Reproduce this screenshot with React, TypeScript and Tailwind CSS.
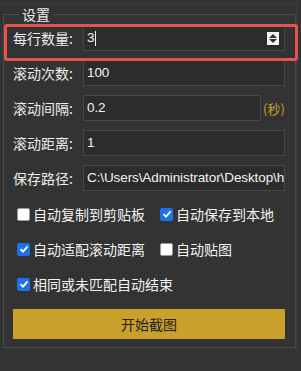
import React from "react";

const cjk = { fontFamily: '"Noto Sans CJK SC", "Liberation Sans", sans-serif' };
const latin = { fontFamily: '"Liberation Sans", "Noto Sans CJK SC", sans-serif' };

function Field({
  label,
  value,
  suffix,
  spin,
  caret,
}: {
  label: string;
  value: string;
  suffix?: string;
  spin?: boolean;
  caret?: boolean;
}) {
  return (
    <div className="flex items-center h-[26px] min-w-0">
      <div className="w-[70px] shrink-0 text-[14px] text-[#ececec] leading-none" style={cjk}>
        {label}
      </div>
      <div className="flex-1 min-w-0 flex items-center gap-[2px] h-full">
        <div className="flex-1 min-w-0 h-full flex items-center bg-[#2c2c2c] border border-[#474747] pl-[3px] pr-[2px] overflow-hidden">
          <span className="text-[13.5px] tracking-[-0.1px] text-[#f2f2f2] whitespace-nowrap leading-none" style={latin}>
            {value}
          </span>
          {caret && <span className="w-px h-[15px] bg-[#f2f2f2] ml-px" />}
          {spin && (
            <div className="ml-auto mr-[3px] w-[12px] h-[13px] bg-[#f0f0f0] flex flex-col items-center justify-center gap-[1px]">
              <svg width="8" height="4" viewBox="0 0 8 4">
                <path d="M0 4 L4 0 L8 4 Z" fill="#333" />
              </svg>
              <svg width="8" height="4" viewBox="0 0 8 4">
                <path d="M0 0 L4 4 L8 0 Z" fill="#333" />
              </svg>
            </div>
          )}
        </div>
        {suffix && (
          <span className="text-[13px] text-[#c9a02a] leading-none w-[22px] shrink-0" style={cjk}>
            {suffix}
          </span>
        )}
      </div>
    </div>
  );
}

function Check({ label, checked }: { label: string; checked?: boolean }) {
  return (
    <div className="flex items-center gap-[3px]">
      {checked ? (
        <div className="w-[13px] h-[13px] rounded-[2px] bg-[#1a73e8] flex items-center justify-center">
          <svg width="10" height="10" viewBox="0 0 10 10">
            <path d="M1.5 5.2 L4 7.6 L8.6 2.4" stroke="#fff" strokeWidth="1.8" fill="none" />
          </svg>
        </div>
      ) : (
        <div className="w-[13px] h-[13px] rounded-[2px] bg-white border border-[#9a9a9a]" />
      )}
      <span className="text-[14px] text-[#f2f2f2] leading-none" style={cjk}>
        {label}
      </span>
    </div>
  );
}

export default function App() {
  return (
    <div className="relative w-[301px] h-[371px] bg-[#333333] overflow-hidden pt-[4px]">
      <div className="border-t border-r border-[#3d3d3d] w-[297px] pt-[2px]">
        <fieldset className="min-w-0 w-[293px] ml-[3px] border border-[#4a4a4a] pl-[9px] pr-[10px] pt-[4px] pb-[8px]">
          <legend className="ml-[6px] px-[3px] text-[14px] text-[#ececec] leading-none" style={cjk}>
            设置
          </legend>
          <div className="flex flex-col gap-[9px] min-w-0">
            <Field label="每行数量:" value="3" spin caret />
            <Field label="滚动次数:" value="100" />
            <Field label="滚动间隔:" value="0.2" suffix="(秒)" />
            <Field label="滚动距离:" value="1" />
            <Field label="保存路径:" value="C:\Users\Administrator\Desktop\h" />
          </div>
          <div className="flex flex-col gap-[21px] pl-[4px] mt-[16px]">
            <div className="flex">
              <div className="w-[143px]">
                <Check label="自动复制到剪贴板" />
              </div>
              <Check label="自动保存到本地" checked />
            </div>
            <div className="flex">
              <div className="w-[143px]">
                <Check label="自动适配滚动距离" checked />
              </div>
              <Check label="自动贴图" />
            </div>
            <Check label="相同或未匹配自动结束" checked />
          </div>
          <button className="mt-[18px] w-full h-[30px] bg-[#c9a02a] text-[14px] text-[#222] leading-none" style={cjk}>
            开始截图
          </button>
        </fieldset>
      </div>
      <div className="absolute left-[4px] top-[24px] w-[294px] h-[37px] border-[3px] border-[#e5534f] rounded-[3px]" />
    </div>
  );
}
